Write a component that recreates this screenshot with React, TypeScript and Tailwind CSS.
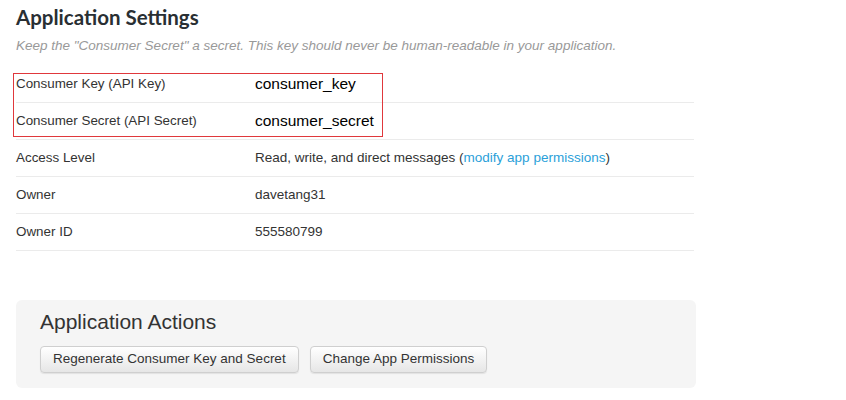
import React from "react";

const rows = [
  { label: "Consumer Key (API Key)", value: "consumer_key", big: true },
  { label: "Consumer Secret (API Secret)", value: "consumer_secret", big: true },
  { label: "Access Level", value: "access", big: false },
  { label: "Owner", value: "davetang31", big: false },
  { label: "Owner ID", value: "555580799", big: false },
];

function Row({ label, value, big }: { label: string; value: string; big: boolean }) {
  return (
    <div className="flex items-center h-[37px] border-b border-[#ebebeb]">
      <div className="w-[239px] text-[13.4px] text-[#333]">{label}</div>
      {value === "access" ? (
        <div className="text-[13.5px] text-[#333]">
          Read, write, and direct messages (
          <a className="text-[#2b9fd9]">modify app permissions</a>)
        </div>
      ) : (
        <div className={big ? "text-[15.5px] text-black" : "text-[13.5px] text-[#333]"}>{value}</div>
      )}
    </div>
  );
}

export default function App() {
  return (
    <div className="w-[846px] h-[400px] bg-white font-['Liberation_Sans',Arial,sans-serif] pl-4 pt-[5px]">
      {/* Settings header */}
      <h1 className="font-['Lato',sans-serif] font-bold text-[20.5px] leading-[24px] text-[#292f33]">
        Application Settings
      </h1>
      <p className="mt-[10px] text-[13.5px] leading-[14px] italic text-[#999]">
        Keep the "Consumer Secret" a secret. This key should never be human-readable in your application.
      </p>

      {/* Key table */}
      <div className="relative mt-[13px] w-[678px]">
        {rows.map((r) => (
          <Row key={r.label} {...r} />
        ))}
        {/* red annotation box */}
        <div className="absolute left-[-3px] top-[7px] w-[370px] h-[64px] border border-[#e0383c]" />
      </div>

      {/* Actions */}
      <div className="mt-[49px] w-[680px] h-[88px] bg-[#f5f5f5] rounded-md pl-6 pt-[10px]">
        <h2 className="text-[21px] leading-[24px] text-[#333]">Application Actions</h2>
        <div className="flex gap-[11px] mt-[12px]">
          <button className="h-[27px] px-[12px] text-[13.5px] text-[#333] border border-[#cfcfcf] rounded bg-gradient-to-b from-white to-[#e6e6e6] shadow-[0_1px_1px_rgba(0,0,0,0.08)]">
            Regenerate Consumer Key and Secret
          </button>
          <button className="h-[27px] px-[12px] text-[13.5px] text-[#333] border border-[#cfcfcf] rounded bg-gradient-to-b from-white to-[#e6e6e6] shadow-[0_1px_1px_rgba(0,0,0,0.08)]">
            Change App Permissions
          </button>
        </div>
      </div>
    </div>
  );
}
